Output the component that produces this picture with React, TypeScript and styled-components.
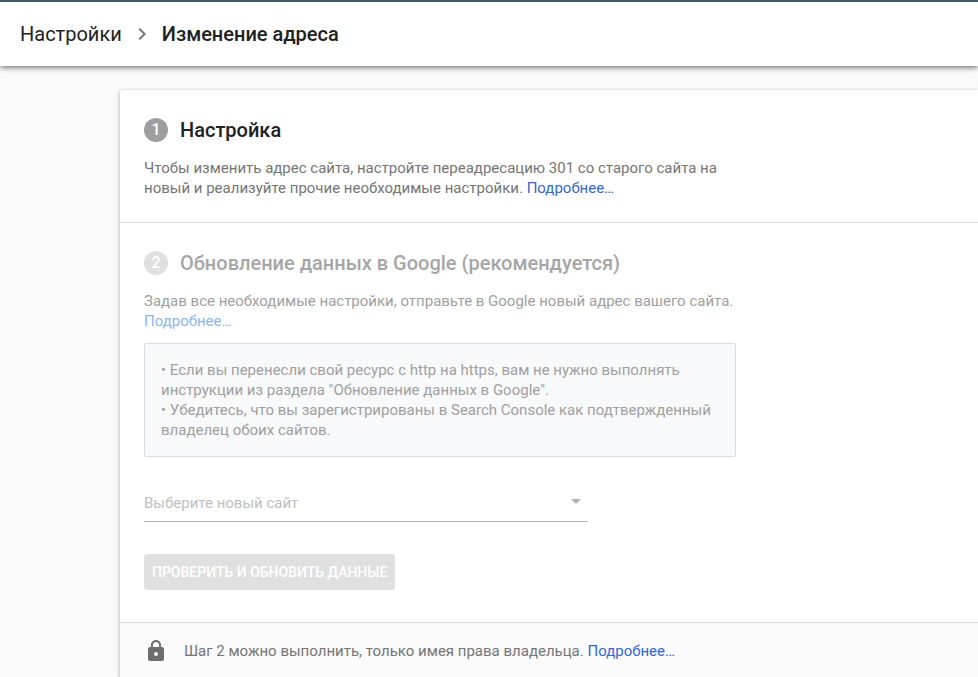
import React from "react";
import styled, { createGlobalStyle } from "styled-components";

const GlobalStyle = createGlobalStyle`
  *, *::before, *::after { box-sizing: border-box; }
  html, body { margin: 0; }
  body {
    min-height: 100vh;
    background: #fafafa;
    color: #212121;
    font-family: Roboto, "Liberation Sans", sans-serif;
    font-size: 15px;
    line-height: 20px;
    overflow: hidden;
  }
`;

const Header = styled.header`
  display: flex;
  align-items: center;
  height: 66px;
  border-top: 2px solid #455a64;
  padding: 0 20px;
  background: #fff;
  box-shadow: 0 1px 6px rgba(0, 0, 0, 0.65);
`;

const Breadcrumbs = styled.nav`
  display: flex;
  align-items: center;
  gap: 8px;
  font-size: 20px;
  line-height: 28px;
`;

const Crumb = styled.a`
  color: #212121;
  text-decoration: none;
`;

const CurrentPage = styled.h1`
  margin: 0;
  font-size: 20px;
  line-height: 28px;
  font-weight: 500;
`;

const Main = styled.main`
  padding: 24px 0 0 120px;
`;

const Card = styled.div`
  border-radius: 2px 0 0 0;
  background: #fff;
  box-shadow: 0 1px 4px rgba(0, 0, 0, 0.35);
`;

const Step = styled.section<{ $muted?: boolean }>`
  padding: ${(p) => (p.$muted ? "28px 24px 32px" : "28px 24px 24px")};
  border-bottom: 1px solid #dadada;
  color: ${(p) => (p.$muted ? "#a0a0a0" : "#757575")};
`;

const StepHeader = styled.div`
  display: flex;
  align-items: center;
  gap: 12px;
  height: 24px;
  margin-bottom: 16px;
`;

const StepNumber = styled.span<{ $muted?: boolean }>`
  width: 24px;
  height: 24px;
  border-radius: 50%;
  background: ${(p) => (p.$muted ? "#e0e0e0" : "#9e9e9e")};
  color: #fff;
  font-size: 16px;
  line-height: 24px;
  font-weight: 500;
  text-align: center;
`;

const StepTitle = styled.h2<{ $muted?: boolean }>`
  margin: 0;
  color: ${(p) => (p.$muted ? "#a6a6a6" : "#212121")};
  font-size: 20px;
  line-height: 24px;
  font-weight: 500;
`;

const Text = styled.p`
  max-width: 592px;
  margin: 0;
`;

const Link = styled.a<{ $muted?: boolean }>`
  color: ${(p) => (p.$muted ? "#8ab4f0" : "#3367d6")};
  text-decoration: none;
`;

const Notice = styled.div`
  max-width: 592px;
  margin-top: 12px;
  padding: 16px;
  border: 1px solid #d5dbe0;
  background: #f8f9fb;
  border-radius: 2px;
`;

const SelectField = styled.label`
  display: grid;
  align-items: center;
  max-width: 444px;
  margin-top: 28px;
  border-bottom: 1px solid #b8b8b8;
`;

const Select = styled.select`
  grid-area: 1 / 1;
  width: 100%;
  height: 36px;
  padding: 0;
  border: 0;
  appearance: none;
  background: transparent;
  color: #c0c0c0;
  font: inherit;
  opacity: 1;
`;

const Arrow = styled.svg`
  grid-area: 1 / 1;
  justify-self: end;
  margin: 0 7px 4px 0;
  pointer-events: none;
`;

const SubmitButton = styled.button`
  display: block;
  height: 36px;
  margin-top: 32px;
  padding: 0 8px;
  border: 0;
  border-radius: 3px;
  background: #e0e0e0;
  color: #fff;
  font: inherit;
  font-size: 14px;
  font-weight: 500;
  text-transform: uppercase;
`;

const Footer = styled.footer`
  display: flex;
  align-items: center;
  gap: 16px;
  height: 56px;
  padding: 0 24px;
  background: #fafafa;
  color: #757575;
`;

export default function App() {
  return (
    <>
      <GlobalStyle />
      <Header>
        <Breadcrumbs aria-label="Навигация">
          <Crumb href="#settings">Настройки</Crumb>
          <svg width="24" height="24" viewBox="0 0 24 24" fill="#757575" aria-hidden="true">
            <path d="M10 6 8.59 7.41 13.17 12l-4.58 4.59L10 18l6-6z" />
          </svg>
          <CurrentPage>Изменение адреса</CurrentPage>
        </Breadcrumbs>
      </Header>
      <Main>
        <Card>
          <Step>
            <StepHeader>
              <StepNumber>1</StepNumber>
              <StepTitle>Настройка</StepTitle>
            </StepHeader>
            <Text>
              Чтобы изменить адрес сайта, настройте переадресацию 301 со старого сайта на новый и
              реализуйте прочие необходимые настройки. <Link href="#setup">Подробнее…</Link>
            </Text>
          </Step>
          <Step $muted>
            <StepHeader>
              <StepNumber $muted>2</StepNumber>
              <StepTitle $muted>Обновление данных в Google (рекомендуется)</StepTitle>
            </StepHeader>
            <Text>
              Задав все необходимые настройки, отправьте в Google новый адрес вашего сайта.{" "}
              <Link $muted href="#update">Подробнее…</Link>
            </Text>
            <Notice>
              <Text>
                • Если вы перенесли свой ресурс с http на https, вам не нужно выполнять инструкции
                из раздела "Обновление данных в Google".
              </Text>
              <Text>
                • Убедитесь, что вы зарегистрированы в Search Console как подтвержденный владелец
                обоих сайтов.
              </Text>
            </Notice>
            <SelectField>
              <Select disabled aria-label="Выберите новый сайт">
                <option>Выберите новый сайт</option>
              </Select>
              <Arrow width="10" height="5" viewBox="0 0 10 5" fill="#b0b0b0" aria-hidden="true">
                <path d="M0 0h10L5 5z" />
              </Arrow>
            </SelectField>
            <SubmitButton type="button" disabled>
              Проверить и обновить данные
            </SubmitButton>
          </Step>
          <Footer>
            <svg width="24" height="24" viewBox="0 0 24 24" fill="#6e6e6e" aria-hidden="true">
              <path d="M18 8h-1V6c0-2.76-2.24-5-5-5S7 3.24 7 6v2H6c-1.1 0-2 .9-2 2v10c0 1.1.9 2 2 2h12c1.1 0 2-.9 2-2V10c0-1.1-.9-2-2-2zm-6 9c-1.1 0-2-.9-2-2s.9-2 2-2 2 .9 2 2-.9 2-2 2zm3.1-9H8.9V6c0-1.71 1.39-3.1 3.1-3.1s3.1 1.39 3.1 3.1v2z" />
            </svg>
            <Text>
              Шаг 2 можно выполнить, только имея права владельца.{" "}
              <Link href="#owner">Подробнее…</Link>
            </Text>
          </Footer>
        </Card>
      </Main>
    </>
  );
}
